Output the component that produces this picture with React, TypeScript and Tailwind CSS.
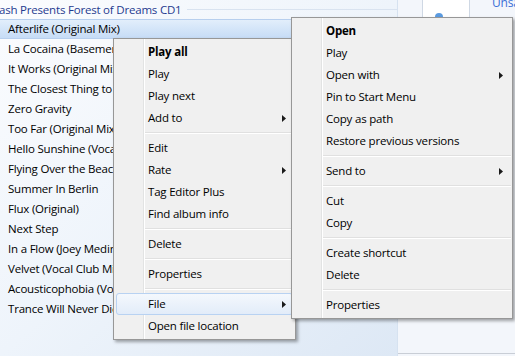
import React from 'react'

type Item = { label: string; bold?: boolean; arrow?: boolean; hover?: boolean } | 'sep'

const tracks = [
  'La Cocaina (Basement Mix)',
  'It Works (Original Mix)',
  'The Closest Thing to Heaven',
  'Zero Gravity',
  'Too Far (Original Mix)',
  'Hello Sunshine (Vocal Mix)',
  'Flying Over the Beach',
  'Summer In Berlin',
  'Flux (Original)',
  'Next Step',
  'In a Flow (Joey Medina Remix)',
  'Velvet (Vocal Club Mix)',
  'Acousticophobia (Vocal Mix)',
  'Trance Will Never Die',
]

const songMenu: Item[] = [
  { label: 'Play all', bold: true },
  { label: 'Play' },
  { label: 'Play next' },
  { label: 'Add to', arrow: true },
  'sep',
  { label: 'Edit' },
  { label: 'Rate', arrow: true },
  { label: 'Tag Editor Plus' },
  { label: 'Find album info' },
  'sep',
  { label: 'Delete' },
  'sep',
  { label: 'Properties' },
  'sep',
  { label: 'File', arrow: true, hover: true },
  { label: 'Open file location' },
]

const fileMenu: Item[] = [
  { label: 'Open', bold: true },
  { label: 'Play' },
  { label: 'Open with', arrow: true },
  { label: 'Pin to Start Menu' },
  { label: 'Copy as path' },
  { label: 'Restore previous versions' },
  'sep',
  { label: 'Send to', arrow: true },
  'sep',
  { label: 'Cut' },
  { label: 'Copy' },
  'sep',
  { label: 'Create shortcut' },
  { label: 'Delete' },
  'sep',
  { label: 'Properties' },
]

function Arrow() {
  return (
    <svg width="4" height="7" viewBox="0 0 4 7" className="absolute right-[6px] top-[7px]">
      <path d="M0 0 L4 3.5 L0 7 Z" fill="#1a1a1a" />
    </svg>
  )
}

function MenuItems({ items }: { items: Item[] }) {
  return (
    <div className="relative py-[2px]">
      {/* gutter line */}
      <div className="absolute left-[29px] top-0 bottom-0 w-px bg-[#e2e3e3] shadow-[1px_0_0_#ffffff]" />
      {items.map((it, i) =>
        it === 'sep' ? (
          <div key={i} className="h-[8px] pl-[30px] pr-[1px] flex items-center">
            <div className="w-full h-[2px] border-t border-[#e0e0e0] border-b border-b-white" />
          </div>
        ) : (
          <div key={i} className="relative h-[22px] px-[2px]">
            <div
              className={
                it.hover
                  ? 'h-full rounded-[3px] border border-[#b8d2f2] bg-gradient-to-b from-[#f4f8fd] to-[#e2ecf9] flex items-center pl-[31px] relative'
                  : 'h-full border border-transparent flex items-center pl-[31px] relative'
              }
            >
              <span className={it.bold ? 'font-bold' : ''}>{it.label}</span>
              {it.arrow && <Arrow />}
            </div>
          </div>
        )
      )}
    </div>
  )
}

export default function App() {
  return (
    <div className="relative w-[515px] h-[356px] overflow-hidden font-['Open_Sans',sans-serif] text-[11.5px] tracking-[-0.2px] text-black bg-[#f3f6fb]">
      <div className="flex h-full">
        {/* song list */}
        <div className="w-[398px] shrink-0 h-full bg-gradient-to-br from-[#fbfcfe] via-[#eef4fb] to-[#dde8f5] border-r border-[#d6e2f0]">
          <div className="h-[19px] flex items-center text-[#1f3a8f] -ml-[1px]">
            <span className="whitespace-nowrap">ash Presents Forest of Dreams CD1</span>
            <div className="flex-1 h-px bg-[#d9e3f0] ml-[6px]" />
          </div>
          <div className="h-[20px] flex items-center pl-[8px] border-y border-[#b7cfee] bg-gradient-to-b from-[#e2eefb] to-[#c6dcf6]">
            Afterlife (Original Mix)
          </div>
          {tracks.map(t => (
            <div key={t} className="h-[20px] flex items-center pl-[8px] whitespace-nowrap overflow-hidden">
              {t}
            </div>
          ))}
        </div>
        {/* right pane */}
        <div className="flex-1 min-w-0 overflow-hidden h-full flex flex-col">
          <div className="flex h-[17px] shrink-0">
            <div className="w-[24px] shrink-0" />
            <div className="w-[48px] shrink-0 h-full bg-white border-x border-[#cfd8e4] relative">
              <div className="absolute left-[12px] top-[13px] w-[8px] h-[4px] rounded-t-full bg-[#5b9be0]" />
            </div>
            <div className="pl-[22px] -mt-[6px] text-[12px] text-[#3a6fd8] whitespace-nowrap">Unsaved list</div>
          </div>
          <div className="flex-1" />
          <div className="h-[3px] border-t border-[#c9ced6]" />
        </div>
      </div>

      {/* song context menu */}
      <div className="absolute left-[113px] top-[38px] w-[183px] bg-[#f0f0f0] border border-[#979797] shadow-[2px_2px_3px_rgba(0,0,0,0.35)]">
        <MenuItems items={songMenu} />
      </div>

      {/* file submenu */}
      <div className="absolute left-[291px] top-[17px] w-[222px] bg-[#f0f0f0] border border-[#979797] shadow-[2px_2px_3px_rgba(0,0,0,0.35)]">
        <MenuItems items={fileMenu} />
      </div>
    </div>
  )
}
